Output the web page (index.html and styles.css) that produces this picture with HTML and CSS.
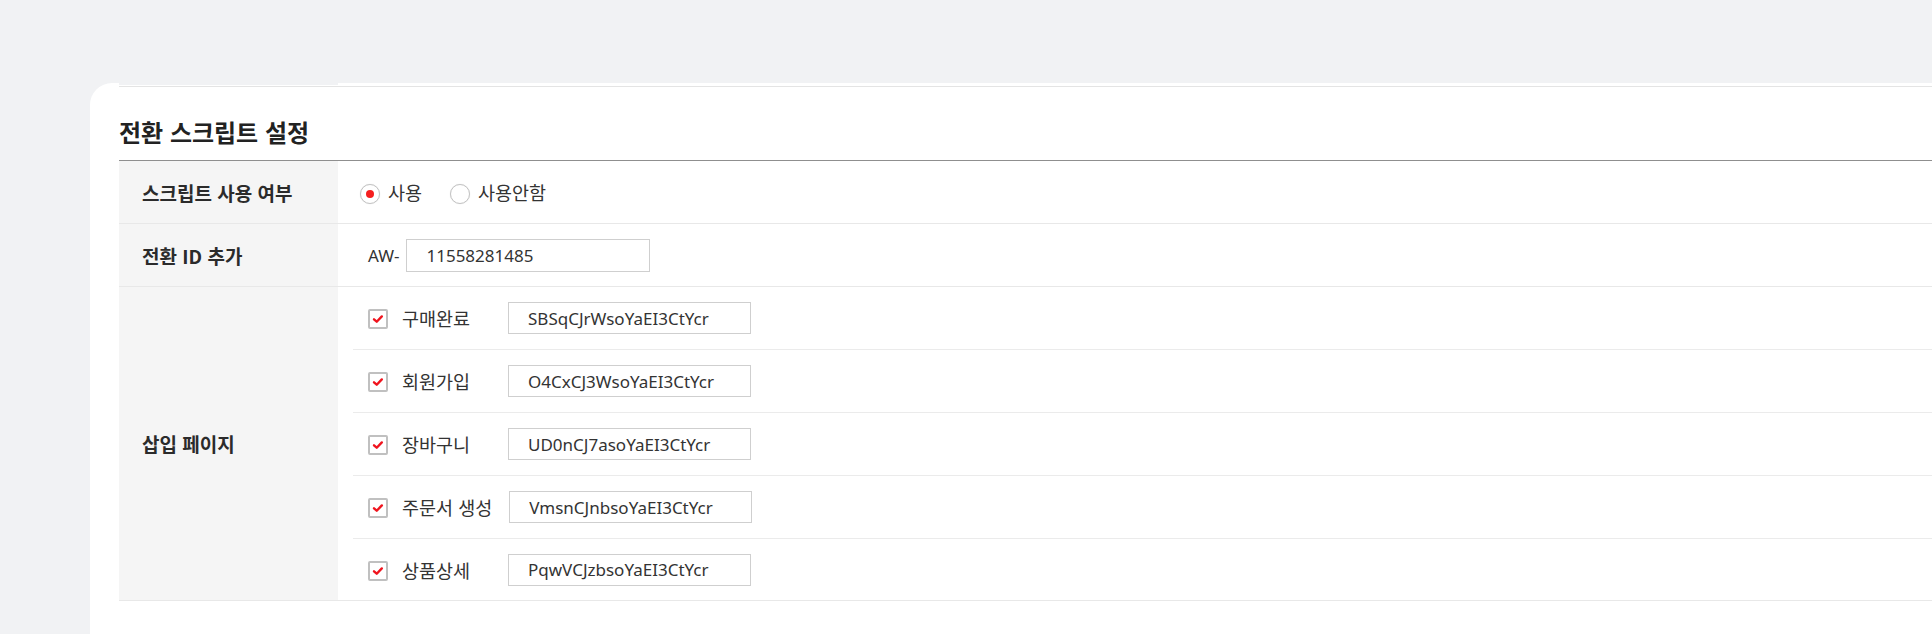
FILE: index.html
```html
<!DOCTYPE html>
<html lang="ko">
<head>
<meta charset="utf-8">
<title>전환 스크립트 설정</title>
<link rel="stylesheet" href="styles.css">
</head>
<body>
<div class="card">
  <div class="topstrip"><span class="tabstub"></span></div>
  <h2 class="title">전환 스크립트 설정</h2>
  <div class="table">
    <div class="row">
      <div class="label">스크립트 사용 여부</div>
      <div class="value radios">
        <label class="radio"><span class="rbox on"></span><span>사용</span></label>
        <label class="radio"><span class="rbox"></span><span>사용안함</span></label>
      </div>
    </div>
    <div class="row">
      <div class="label">전환 ID 추가</div>
      <div class="value idval">
        <span class="prefix">AW-</span>
        <span class="input wide">11558281485</span>
      </div>
    </div>
    <div class="row">
      <div class="label">삽입 페이지</div>
      <div class="value pages">
        <div class="sub">
          <span class="cbox"><svg viewBox="0 0 20 20" width="20" height="20"><path d="M5 10.4 L8.4 13.4 L14.8 6.8" fill="none" stroke="#f0141e" stroke-width="3" stroke-linecap="round" stroke-linejoin="round"/></svg></span>
          <span class="pname">구매완료</span>
          <span class="input">SBSqCJrWsoYaEI3CtYcr</span>
        </div>
        <div class="sub">
          <span class="cbox"><svg viewBox="0 0 20 20" width="20" height="20"><path d="M5 10.4 L8.4 13.4 L14.8 6.8" fill="none" stroke="#f0141e" stroke-width="3" stroke-linecap="round" stroke-linejoin="round"/></svg></span>
          <span class="pname">회원가입</span>
          <span class="input">O4CxCJ3WsoYaEI3CtYcr</span>
        </div>
        <div class="sub">
          <span class="cbox"><svg viewBox="0 0 20 20" width="20" height="20"><path d="M5 10.4 L8.4 13.4 L14.8 6.8" fill="none" stroke="#f0141e" stroke-width="3" stroke-linecap="round" stroke-linejoin="round"/></svg></span>
          <span class="pname">장바구니</span>
          <span class="input">UD0nCJ7asoYaEI3CtYcr</span>
        </div>
        <div class="sub">
          <span class="cbox"><svg viewBox="0 0 20 20" width="20" height="20"><path d="M5 10.4 L8.4 13.4 L14.8 6.8" fill="none" stroke="#f0141e" stroke-width="3" stroke-linecap="round" stroke-linejoin="round"/></svg></span>
          <span class="pname">주문서 생성</span>
          <span class="input">VmsnCJnbsoYaEI3CtYcr</span>
        </div>
        <div class="sub">
          <span class="cbox"><svg viewBox="0 0 20 20" width="20" height="20"><path d="M5 10.4 L8.4 13.4 L14.8 6.8" fill="none" stroke="#f0141e" stroke-width="3" stroke-linecap="round" stroke-linejoin="round"/></svg></span>
          <span class="pname">상품상세</span>
          <span class="input">PqwVCJzbsoYaEI3CtYcr</span>
        </div>
      </div>
    </div>
  </div>
</div>
</body>
</html>
```
FILE: styles.css
```css
html, body {
  margin: 0;
  padding: 0;
}
body {
  background: #f1f2f4;
  font-family: "Noto Sans", "Noto Sans CJK KR", sans-serif;
  font-size: 17px;
  color: #333;
  overflow: hidden;
}
.card {
  margin: 83px 0 0 90px;
  background: #fff;
  border-top-left-radius: 22px;
  padding-left: 29px;
  height: 600px;
}
.topstrip {
  height: 3px;
  border-bottom: 1px solid #e4e4e4;
  display: flex;
}
.tabstub {
  width: 219px;
  height: 2px;
  background: #f1f2f4;
}
.title {
  margin: 0;
  padding: 29px 0 12px;
  font-size: 24px;
  line-height: 32px;
  font-weight: 700;
  color: #222;
  font-family: "Noto Sans CJK KR", sans-serif;
}
.table {
  border-top: 1px solid #8f8f8f;
}
.row {
  display: flex;
  border-bottom: 1px solid #e8e8e8;
}
.label {
  width: 219px;
  flex: none;
  box-sizing: border-box;
  padding-left: 23px;
  background: #f5f5f5;
  display: flex;
  align-items: center;
  font-weight: 700;
  font-size: 19px;
  color: #2b2b2b;
  font-family: "Noto Sans CJK KR", sans-serif;
  min-height: 62px;
}
.value {
  flex: 1;
  display: flex;
  align-items: center;
  min-height: 62px;
}
.radios {
  padding-left: 22px;
  gap: 28px;
}
.radio {
  display: flex;
  align-items: center;
  gap: 8px;
  font-family: "Noto Sans CJK KR", sans-serif;
  font-size: 18.5px;
}
.rbox {
  width: 20px;
  height: 20px;
  box-sizing: border-box;
  border: 1.5px solid #c3c3c3;
  border-radius: 50%;
  background: #fff;
  display: flex;
  align-items: center;
  justify-content: center;
  margin-top: 4px;
  box-shadow: 0 0 1px #ddd;
}
.rbox.on::after {
  content: "";
  width: 8px;
  height: 8px;
  border-radius: 50%;
  background: #f51f1f;
}
.idval {
  padding-left: 30px;
}
.prefix {
  margin-right: 7px;
}
.input {
  box-sizing: border-box;
  width: 243px;
  height: 32px;
  border: 1px solid #cfcfcf;
  display: flex;
  align-items: center;
  padding-left: 19px;
  color: #333;
  font-size: 17px;
  background: #fff;
}
.input.wide {
  width: 244px;
  height: 33px;
}
.pages {
  flex-direction: column;
  align-items: stretch;
}
.sub {
  display: flex;
  align-items: center;
  margin-left: 15px;
  padding-left: 15px;
  height: 62px;
  border-bottom: 1px solid #ebebeb;
}
.sub:last-child {
  border-bottom: none;
  height: 61px;
}
.cbox {
  width: 20px;
  height: 20px;
  box-sizing: border-box;
  border: 2px solid #c0c0c0;
  border-radius: 2px;
  display: flex;
  align-items: center;
  justify-content: center;
  margin-top: 2px;
  background: #fff;
}
.cbox svg {
  display: block;
  width: 16px;
  height: 16px;
}
.pname {
  min-width: 89px;
  margin-left: 14px;
  margin-right: 17px;
  font-family: "Noto Sans CJK KR", sans-serif;
  font-size: 18.5px;
  white-space: nowrap;
}
```
